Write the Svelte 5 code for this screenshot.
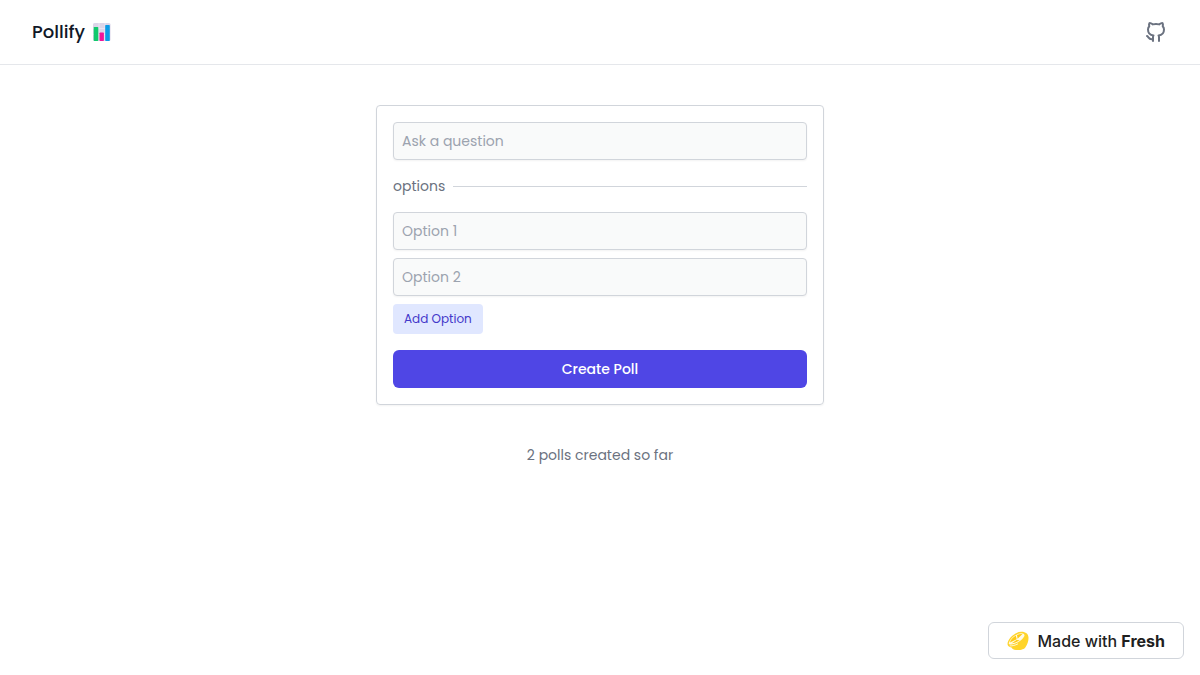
<script>
    let question = '';
    let options = ['', ''];
    let pollCount = 2;

    const addOption = () => {
        options = [...options, ''];
    }
    const createPoll = () => {
        if(!question.trim()) return;
        pollCount += 1;
        question = '';
        options = ['', ''];
    }
</script>

<div class="page">
    <header>
        <a class="brand" href="/">
            Pollify
            <svg width="18" height="18" viewBox="0 0 18 18" aria-hidden="true">
                <rect width="17.5" height="18" rx="1.5" fill="#dcd5e8" />
                <path d="M0 5.5h17.5M0 11.5h17.5M6 0v18M12 0v18" stroke="#eee9f5" stroke-width="0.8" />
                <rect x="0.7" y="4" width="4.6" height="14" rx="0.7" fill="#10c96c" />
                <rect x="6.5" y="9.5" width="4.4" height="8.5" rx="0.7" fill="#f0149a" />
                <rect x="12.2" y="2" width="4.6" height="16" rx="0.7" fill="#0a9ce6" />
            </svg>
        </a>
        <a class="github" href="https://github.com" aria-label="GitHub">
            <svg width="24" height="24" viewBox="0 0 24 24" fill="none" stroke="currentColor" stroke-width="2" stroke-linecap="round" stroke-linejoin="round">
                <path d="M9 19c-4.3 1.4-4.3-2.5-6-3m12 5v-3.5c0-1 .1-1.4-.5-2 2.8-.3 5.5-1.4 5.5-6a4.6 4.6 0 0 0-1.3-3.2 4.2 4.2 0 0 0-.1-3.2s-1.1-.3-3.5 1.3a12.3 12.3 0 0 0-6.200 0C6.5 2.8 5.400 3.100 5.400 3.100a4.2 4.2 0 0 0-.1 3.2A4.6 4.6 0 0 0 4 9.5c0 4.600 2.700 5.700 5.500 6-.6.6-.6 1.200-.5 2V21" />
            </svg>
        </a>
    </header>

    <main>
        <form on:submit|preventDefault={createPoll}>
            <input type="text" placeholder="Ask a question" aria-label="Question" bind:value={question} />
            <fieldset>
                <legend>options</legend>
                <div class="options">
                    {#each options as option, i}
                        <input type="text" placeholder="Option {i + 1}" aria-label="Option {i + 1}" bind:value={option} />
                    {/each}
                    <button class="add" type="button" on:click={addOption}>Add Option</button>
                </div>
            </fieldset>
            <button class="create" type="submit">Create Poll</button>
        </form>
        <p>{pollCount} polls created so far</p>
    </main>

    <footer>
        <a class="fresh" href="https://fresh.deno.dev">
            <svg width="22" height="20" viewBox="0 0 22 20" aria-hidden="true">
                <!-- peel, cut face, segments -->
                <path d="M.5 13C.5 7.500 8 .8 14.500.8c4.300 0 6.800 2.200 7 5.700.1 3.500-1.100 6.500-2.900 9.500C17.500 18.500 13 19.300 9 19c-2.300-.2-3.800-1-4.500-2.600C2 16 .5 15 .5 13z" fill="#ffd42a" />
                <path d="M1.800 12.200C3 7.500 9 2.400 14 2.300c3.300 0 4.200 1.500 3 3.500-2.400 4-8.200 7.400-12.800 7.700-1.700.1-2.600-.3-2.400-1.300z" fill="#fffae5" />
                <path d="M2.900 11.500c.9-2.900 3.100-5.200 5.900-6.900l.9 3.600zM10 4.100c1.900-1 4.100-1.500 5.500-1l-4.900 4.700zM9.500 9.100l3.200.2c-2.300 1.500-5.500 2.900-8.300 3.100z" fill="#ffcb14" />
                <path d="M3.200 14.900c2.200.1 5-.6 7.500-1.900" fill="none" stroke="#fffae5" stroke-width="0.9" stroke-linecap="round" />
            </svg>
            <span>Made with <b>Fresh</b></span>
        </a>
    </footer>
</div>

<style>
    :global(body) {
        margin: 0;
        background: #fff;
    }
    .page {
        display: flex;
        flex-direction: column;
        min-height: 100vh;
        color: #111827;
        font-family: Poppins, Inter, sans-serif;
        font-size: 14px;
        line-height: 20px;
    }
    a {
        color: inherit;
        text-decoration: none;
    }
    svg {
        display: block;
    }
    header {
        display: flex;
        justify-content: space-between;
        align-items: center;
        padding: 20px 32px;
        border-bottom: 1px solid #e5e7eb;
    }
    .brand {
        display: flex;
        align-items: center;
        gap: 8px;
        font-size: 18px;
        font-weight: 500;
    }
    .github {
        color: #6b7280;
    }
    main {
        flex: 1;
        padding: 40px 16px;
    }
    form {
        box-sizing: border-box;
        display: flex;
        flex-direction: column;
        gap: 16px;
        max-width: 448px;
        margin: 0 auto;
        padding: 16px;
        border: 1px solid #d1d5db;
        border-radius: 4px;
        box-shadow: 0 1px 2px rgba(0, 0, 0, 0.05);
    }
    input {
        box-sizing: border-box;
        width: 100%;
        padding: 8px;
        border: 1px solid #d1d5db;
        border-radius: 4px;
        background: #f9fafa;
        box-shadow: 0 1px 2px rgba(0, 0, 0, 0.05);
        color: #111827;
        font: inherit;
    }
    input::placeholder {
        color: #9ca3af;
        opacity: 1;
    }
    fieldset {
        min-width: 0;
        margin: 0;
        padding: 0;
        border: 0;
    }
    legend {
        display: flex;
        align-items: center;
        gap: 8px;
        width: 100%;
        padding: 0;
        margin-bottom: 16px;
        color: #6b7280;
    }
    /* rule that fills the rest of the legend row */
    legend::after {
        content: '';
        flex: 1;
        height: 1px;
        background: #d1d5db;
    }
    .options {
        display: flex;
        flex-direction: column;
        align-items: flex-start;
        gap: 8px;
    }
    button {
        border: 0;
        font: inherit;
        cursor: pointer;
    }
    .add {
        padding: 5px 11px;
        border-radius: 4px;
        background: #e0e7ff;
        color: #4338ca;
        font-size: 12px;
    }
    .create {
        padding: 9px 16px;
        border-radius: 6px;
        background: #4f46e5;
        color: #fff;
        font-weight: 500;
    }
    p {
        margin: 40px 0 0;
        color: #6b7280;
        text-align: center;
    }
    footer {
        display: flex;
        justify-content: flex-end;
        padding: 16px;
    }
    .fresh {
        display: flex;
        align-items: center;
        gap: 8px;
        padding: 8px 18px 7px;
        border: 1px solid #d1d5db;
        border-radius: 6px;
        color: #1f1f1f;
        font-family: Inter, sans-serif;
        font-size: 16px;
        font-weight: 500;
    }
    .fresh b {
        font-weight: 700;
    }
</style>
